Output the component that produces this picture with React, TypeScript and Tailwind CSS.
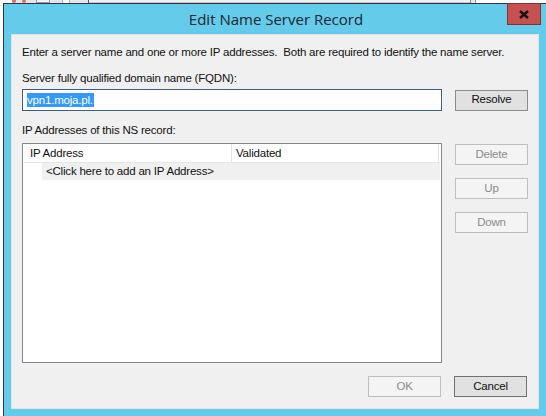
import React from 'react';

const font = "font-['Liberation_Sans',Arial,sans-serif]";

const Btn: React.FC<{ label: string; disabled?: boolean; def?: boolean }> = ({ label, disabled, def }) => (
  <button
    className={
      disabled
        ? 'w-[73px] h-[21px] border border-[#bfbfbf] bg-[#f4f4f4] text-[#8c8c8c] text-[11.5px] tracking-[-0.2px] leading-none'
        : def
          ? 'w-[73px] h-[21px] border border-[#707070] bg-[#e1e1e1] text-[#101010] text-[11.5px] tracking-[-0.2px] leading-none'
          : 'w-[73px] h-[21px] border border-[#8c8c8c] bg-[#e1e1e1] text-[#101010] text-[11.5px] tracking-[-0.2px] leading-none'
    }
  >
    {label}
  </button>
);

export default function App() {
  return (
    <div className={`w-[546px] h-[416px] overflow-hidden bg-white flex flex-col ${font}`}>
      {/* desktop peeking out above the dialog */}
      <div className="h-[3px] flex shrink-0 bg-[#e6e6e6]">
        <div className="w-[12px] bg-white" />
        <div className="w-[4px] bg-[#e07070] rounded-b-full" />
        <div className="w-[6px]" />
        <div className="w-[4px] bg-[#e07070] rounded-b-full" />
        <div className="w-[10px]" />
        <div className="w-[14px] border-x border-b border-[#9a9a9a] bg-[#f4f4f4]" />
        <div className="w-[12px]" />
        <div className="w-[8px] border-x border-[#b0b0b0] bg-white" />
        <div className="w-[18px]" />
        <div className="w-[1px] bg-[#555]" />
        <div className="flex-1 bg-[#f2f2f2] border-b border-[#c8c8c8]" />
        <div className="w-[1px] bg-[#888]" />
        <div className="w-[4px]" />
        <div className="w-[1px] bg-[#999]" />
        <div className="w-[70px] bg-white" />
      </div>

      <div className="flex flex-1 min-h-0">
        <div className="w-[3px] shrink-0 bg-white" />

        {/* dialog window */}
        <div className="flex-1 flex flex-col border-l border-t border-[#2c3640] bg-[#65cbea]">
          <div className="h-[30px] shrink-0 flex items-start relative">
            <div className="flex-1 text-center text-[15px] leading-[30px] text-[#1c2530] pl-[2px] font-['Open_Sans',sans-serif]">
              Edit Name Server Record
            </div>
            <div className="absolute left-[503px] -top-[1px] w-[34px] h-[22px] bg-[#c75050] border border-[#7d3434] flex items-center justify-center">
              <svg width="10" height="9" viewBox="0 0 10 9">
                <path d="M1 1 L9 8 M9 1 L1 8" stroke="#111" strokeWidth="2.4" />
              </svg>
            </div>
          </div>

          <div className="ml-[7px] w-[528px] h-[375px] bg-[#f0f0f0] border border-[#e3e3e3] text-[11.5px] tracking-[-0.2px] text-[#111] flex flex-col px-[10px]">
            <div className="mt-[9px] leading-[16px] whitespace-nowrap">
              Enter a server name and one or more IP addresses.&nbsp; Both are required to identify the name server.
            </div>
            <div className="mt-[10px] leading-[16px]">Server fully qualified domain name (FQDN):</div>

            <div className="mt-[3px] flex items-center">
              <div className="w-[420px] h-[22px] border border-[#3d5f84] bg-white flex items-center pl-[4px]">
                <span className="bg-[#3399ff] text-white leading-[14px] pr-[1px]">vpn1.moja.pl.</span>
              </div>
              <div className="ml-[13px]">
                <Btn label="Resolve" />
              </div>
            </div>

            <div className="mt-[11px] leading-[16px]">IP Addresses of this NS record:</div>

            <div className="mt-[5px] flex items-start">
              <div className="w-[420px] h-[220px] border border-[#828790] bg-white flex flex-col px-[1px]">
                <div className="h-[19px] flex border-b border-[#e5e5e5]">
                  <div className="w-[208px] border-r border-[#e5e5e5] pl-[6px] leading-[18px]">IP Address</div>
                  <div className="flex-1 pl-[4px] leading-[18px] border-r border-[#e5e5e5] mr-[1px]">Validated</div>
                </div>
                <div className="flex h-[17px]">
                  <div className="w-[18px]" />
                  <div className="flex-1 bg-[#f0f0f0] pl-[4px] leading-[17px]">&lt;Click here to add an IP Address&gt;</div>
                </div>
              </div>
              <div className="ml-[13px] mt-[1px] flex flex-col gap-[13px]">
                <Btn label="Delete" disabled />
                <Btn label="Up" disabled />
                <Btn label="Down" disabled />
              </div>
            </div>

            <div className="mt-[13px] flex justify-end gap-[13px] pr-[1px]">
              <Btn label="OK" disabled />
              <Btn label="Cancel" def />
            </div>
          </div>
        </div>
      </div>
    </div>
  );
}
